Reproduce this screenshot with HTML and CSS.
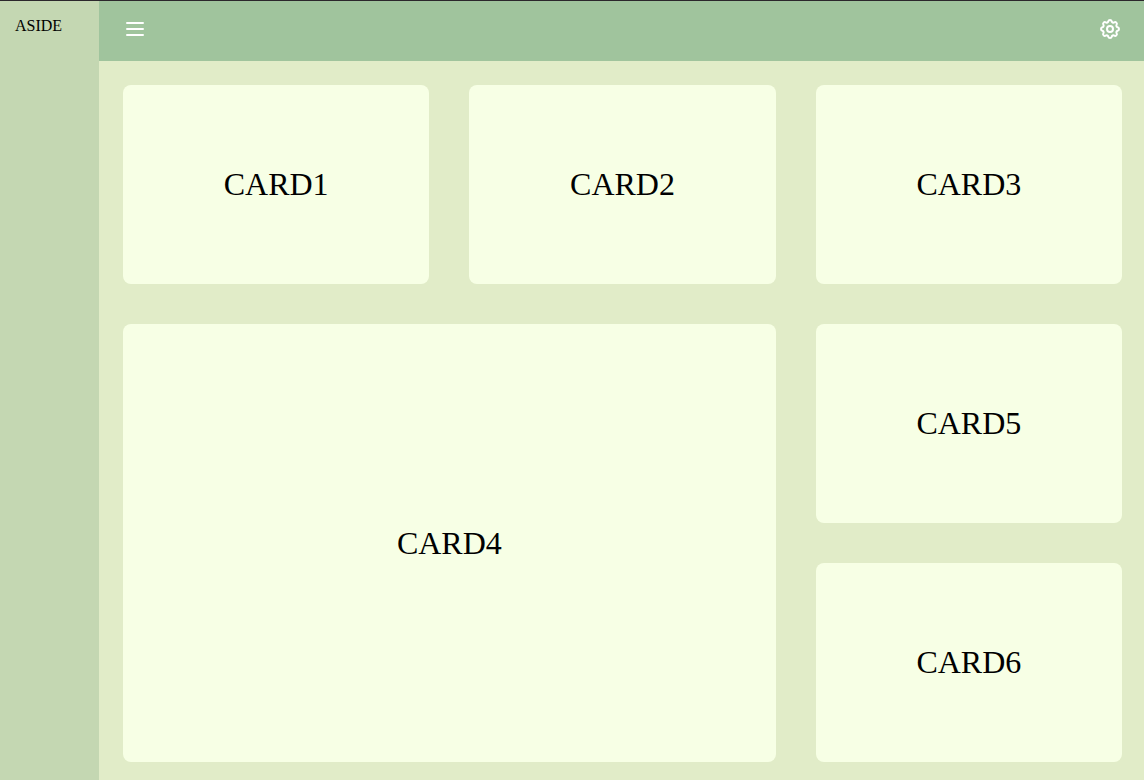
FILE: index.html
```
<!DOCTYPE html>
<html lang="en">
<head>
<meta charset="utf-8">
<title>Dashboard</title>
<link rel="stylesheet" href="styles.css">
</head>
<body>
<div class="layout">
  <aside class="aside">ASIDE</aside>
  <div class="content">
    <header class="header">
      <button class="icon-button" type="button" aria-label="Menu">
        <svg class="icon" viewBox="0 0 24 24" fill="none" stroke="currentColor" stroke-width="2" stroke-linecap="round"><path d="M4 6h16M4 12h16M4 18h16"/></svg>
      </button>
      <button class="icon-button" type="button" aria-label="Settings">
        <svg class="icon" viewBox="0 0 24 24" fill="none" stroke="currentColor" stroke-width="2" stroke-linecap="round" stroke-linejoin="round"><path d="M10.325 4.317c.426-1.756 2.924-1.756 3.35 0a1.724 1.724 0 0 0 2.573 1.066c1.543-.94 3.31.826 2.37 2.37a1.724 1.724 0 0 0 1.065 2.572c1.756.426 1.756 2.924 0 3.35a1.724 1.724 0 0 0-1.066 2.573c.94 1.543-.826 3.31-2.37 2.37a1.724 1.724 0 0 0-2.572 1.065c-.426 1.756-2.924 1.756-3.35 0a1.724 1.724 0 0 0-2.573-1.066c-1.543.94-3.31-.826-2.37-2.37a1.724 1.724 0 0 0-1.065-2.572c-1.756-.426-1.756-2.924 0-3.35a1.724 1.724 0 0 0 1.066-2.573c-.94-1.543.826-3.31 2.37-2.37.996.608 2.296.07 2.572-1.065z"/><circle cx="12" cy="12" r="3"/></svg>
      </button>
    </header>
    <main class="cards">
      <section class="card">CARD1</section>
      <section class="card">CARD2</section>
      <section class="card">CARD3</section>
      <section class="card card-large">CARD4</section>
      <section class="card">CARD5</section>
      <section class="card">CARD6</section>
    </main>
  </div>
</div>
</body>
</html>
```
FILE: styles.css
```
* {
  box-sizing: border-box;
}

body {
  margin: 0;
  font-family: "Liberation Serif", "Times New Roman", serif;
  font-size: 16px;
  color: #000;
  background: #e1ecc8;
}

.layout {
  display: flex;
  min-height: 100vh;
  border-top: 1px solid #2b272c;
}

.aside {
  flex: 0 0 99px;
  padding: 16px 15px;
  line-height: 18px;
  background: #c4d7b2;
}

.content {
  flex: 1;
  display: flex;
  flex-direction: column;
}

.header {
  display: flex;
  justify-content: space-between;
  align-items: flex-start;
  height: 60px;
  padding: 16px 22px 0 24px;
  background: #a0c49d;
}

.icon-button {
  padding: 0;
  border: 0;
  background: none;
  color: #fff;
  cursor: pointer;
}

.icon {
  display: block;
  width: 24px;
  height: 24px;
}

.cards {
  flex: 1;
  display: grid;
  grid-template-columns: repeat(3, 1fr);
  grid-template-rows: repeat(3, 1fr);
  gap: 40px;
  padding: 24px 22px 18px 24px;
}

.card {
  display: flex;
  justify-content: center;
  align-items: center;
  border-radius: 8px;
  font-size: 32px;
  background: #f7ffe5;
}

.card-large {
  grid-column: span 2;
  grid-row: span 2;
}
```
